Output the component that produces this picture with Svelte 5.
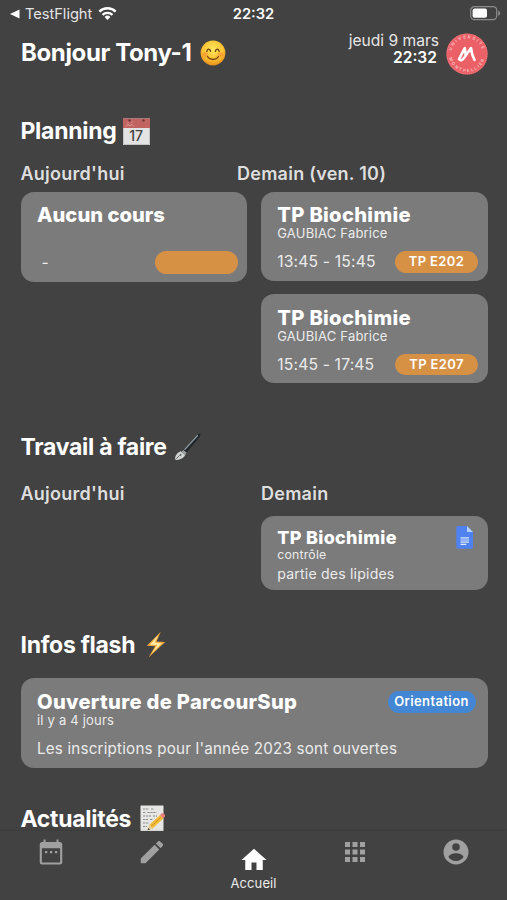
<script lang="ts">
  type Course = { title: string; teacher: string; hours: string; room: string };

  const time = '22:32';
  const date = 'jeudi 9 mars';

  const today: Course[] = [{ title: 'Aucun cours', teacher: '', hours: '\u00a0-', room: '' }];
  const tomorrow: Course[] = [
    { title: 'TP Biochimie', teacher: 'GAUBIAC Fabrice', hours: '13:45 - 15:45', room: 'TP E202' },
    { title: 'TP Biochimie', teacher: 'GAUBIAC Fabrice', hours: '15:45 - 17:45', room: 'TP E207' }
  ];

  // Tab bar icons, 24x24 viewBox
  const tabs = [
    { name: 'Planning', d: 'M19 4h-1V2h-1.600v2H7.600V2H6v2H5a2 2 0 0 0-2 2v14a2 2 0 0 0 2 2h14a2 2 0 0 0 2-2V6a2 2 0 0 0-2-2zm.3 16.300H4.700V9h14.600v11.300zM7.200 11.200h1.800v1.800H7.200zm4 0h1.800v1.800h-1.800zm4 0h1.800v1.800h-1.800z' },
    { name: 'Travail', d: 'M3 17.2V21h3.8L17.8 9.9l-3.7-3.7L3 17.2zM20.7 7a1 1 0 0 0 0-1.4l-2.3-2.3a1 1 0 0 0-1.4 0l-1.9 1.8 3.8 3.8L20.7 7z' },
    { name: 'Accueil', d: 'M10 20v-6h4v6h5v-8h3L12 3 2 12h3v8z', label: 'Accueil' },
    { name: 'Applications', d: 'M4 4h4v4H4zm6 0h4v4h-4zm6 0h4v4h-4zM4 10h4v4H4zm6 0h4v4h-4zm6 0h4v4h-4zM4 16h4v4H4zm6 0h4v4h-4zm6 0h4v4h-4z' },
    { name: 'Compte', d: 'M12 2a10 10 0 1 0 0 20 10 10 0 0 0 0-20zm0 3a3 3 0 1 1 0 6 3 3 0 0 1 0-6zm0 14.2a7.2 7.2 0 0 1-6-3.2c0-2 4-3.1 6-3.1s6 1.1 6 3.1a7.2 7.2 0 0 1-6 3.2z' }
  ];
</script>

{#snippet courseCard(course: Course)}
  <article class="card course">
    <h4 class="card-title">{course.title}</h4>
    <p class="card-sub">{course.teacher}</p>
    <div class="course-foot">
      <span class="hours">{course.hours}</span>
      <span class="room">{course.room}</span>
    </div>
  </article>
{/snippet}

<div class="screen">
  <div class="status">
    <div class="status-left">
      <svg class="back" width="10" height="10" viewBox="0 0 10 10"><path d="M0 5 9.5 .6v8.8z" fill="#fff" /></svg>
      <span>TestFlight</span>
      <svg class="wifi" width="19" height="14" viewBox="0 0 19 14" fill="#fff">
        <path d="M9.5 14 6.6 11a4.1 4.1 0 0 1 5.8 0z" />
        <path d="M3.7 8.1a8.2 8.2 0 0 1 11.6 0l-1.6 1.7a6 6 0 0 0-8.4 0z" />
        <path d="M.5 4.8a12.8 12.8 0 0 1 18 0l-1.7 1.7a10.4 10.4 0 0 0-14.6 0z" />
      </svg>
    </div>
    <span class="status-time">{time}</span>
    <svg class="battery" width="31" height="15" viewBox="0 0 31 15">
      <rect x=".7" y=".7" width="26" height="13" rx="3.6" fill="none" stroke="#8b8b8b" stroke-width="1.2" />
      <rect x="2.6" y="2.6" width="14.4" height="9.2" rx="1.8" fill="#fff" />
      <path d="M28.2 4.6c1.300.6 2 1.600 2 2.600s-.7 2-2 2.600z" fill="#8b8b8b" />
    </svg>
  </div>

  <header>
    <h1>
      Bonjour Tony-1
      <svg class="emoji" width="26" height="26" viewBox="0 0 26 26">
        <defs>
          <radialGradient id="face" cx=".5" cy=".35" r=".65">
            <stop offset="0" stop-color="#ffe65c" />
            <stop offset=".6" stop-color="#fbc534" />
            <stop offset="1" stop-color="#e88f1c" />
          </radialGradient>
        </defs>
        <circle cx="13" cy="13" r="12.400" fill="url(#face)" />
        <ellipse cx="5.500" cy="14.500" rx="3" ry="2.300" fill="#f58a35" opacity=".55" />
        <ellipse cx="20.500" cy="14.500" rx="3" ry="2.300" fill="#f58a35" opacity=".55" />
        <path d="M6.800 11.300c.5-3 3.300-3 3.800 0M15.400 11.300c.5-3 3.300-3 3.800 0" fill="none" stroke="#633b12" stroke-width="1.300" stroke-linecap="round" />
        <path d="M7.500 16.500c2.500 4 8.500 4 11 0" fill="none" stroke="#7a4512" stroke-width="1.300" stroke-linecap="round" />
      </svg>
    </h1>
    <div class="clock">
      <div class="date">{date}</div>
      <div class="time">{time}</div>
    </div>
    <svg class="logo" width="42" height="42" viewBox="0 0 42 42">
      <defs>
        <path id="arc-top" d="M5.800 24a15.500 15.500 0 1 1 30.400 0" />
        <path id="arc-bottom" d="M3.200 17a18.200 18.200 0 1 0 35.600 0" />
      </defs>
      <circle cx="21" cy="21" r="20.600" fill="#ea6066" />
      <circle cx="21" cy="21" r="20" fill="none" stroke="#f58a8e" stroke-width=".8" stroke-dasharray="1 1" />
      <text class="logo-text"><textPath href="#arc-top" startOffset="50%" text-anchor="middle">UNIVERSITÉ</textPath></text>
      <text class="logo-text"><textPath href="#arc-bottom" startOffset="50%" text-anchor="middle">MONTPELLIER</textPath></text>
      <path d="M18.800 15.200 13 26.200c1.800 1.800 4 .6 5.200-1.500l6.800-9.700c.4 4 1.500 8.300 3.500 11.900M18.800 15.200l.9 6.500" fill="none" stroke="#fff" stroke-width="2.600" stroke-linecap="round" stroke-linejoin="round" />
    </svg>
  </header>

  <main>
    <h2 class="planning">
      <span>Planning</span>
      <svg class="emoji" width="27" height="27" viewBox="0 0 27 27">
        <path d="M0 .5h27V27H0z" fill="#e3e3e3" />
        <path d="M0 .5h27V10H0z" fill="#c06361" />
        <path d="M3 8.500 5 6l1.500 2L9 6.500l2 2M4.500 5.200l1-1.500M8.500 5l1.200-1.500" stroke="#dfa09b" stroke-width=".9" fill="none" />
        <circle cx="6.500" cy="2.400" r="1.200" fill="#703432" />
        <circle cx="20.500" cy="2.400" r="1.200" fill="#703432" />
        <path d="M.5 10v16.500h26V10" fill="none" stroke="#c4c4c4" />
        <text x="13.200" y="23" text-anchor="middle" class="cal-day">17</text>
      </svg>
    </h2>
    <div class="days planning-days">
      <h3>Aujourd'hui</h3>
      <h3>Demain (ven. 10)</h3>
    </div>
    <div class="columns">
      <div class="column">
        {#each today as course}{@render courseCard(course)}{/each}
      </div>
      <div class="column">
        {#each tomorrow as course}{@render courseCard(course)}{/each}
      </div>
    </div>

    <h2 class="homework">
      <span>Travail à faire</span>
      <svg class="emoji" width="27" height="28" viewBox="0 0 27 28">
        <path d="M9 17.500 21.500 3.500C23.500 1.300 25.500.3 26.300.6c.5.800-.1 2.800-1.700 4.900L12.300 19.800z" fill="#20262a" />
        <path d="M10.500 16.800 23.800 2.300" stroke="#8d979c" stroke-width="1.300" />
        <path d="m7.500 18.700 2-1.700 3.200 2.700-1.500 2.200z" fill="#9aa0a2" />
        <path d="M.8 27c.3-4 1.900-7.200 5.900-8.700l4.500 3.600c-1.600 3.200-5.300 5-10.400 5.100z" fill="#d0d3d2" />
        <path d="m1 26.800 5-4.600" stroke="#55595b" stroke-width=".8" />
        <circle cx="6.600" cy="21.800" r=".9" fill="#55595b" />
      </svg>
    </h2>
    <div class="days homework-days">
      <h3>Aujourd'hui</h3>
      <h3>Demain</h3>
    </div>
    <div class="columns">
      <div class="column"></div>
      <div class="column">
        <article class="card task">
          <div>
            <h4 class="card-title">TP Biochimie</h4>
            <p class="card-sub">contrôle</p>
            <p class="card-text">partie des lipides</p>
          </div>
          <svg width="17" height="23" viewBox="0 0 17 23">
            <path d="M2 0h9l6 6v15a1.700 1.700 0 0 1-1.700 1.700H2A1.700 1.700 0 0 1 .3 21V1.700A1.700 1.700 0 0 1 2 0z" fill="#4f82ee" />
            <path d="M11 0l6 6h-6z" fill="#b5d0fa" />
            <path d="M4.500 11.800H13M4.500 14H13M4.500 16.200H13M4.500 18.400h5.800" stroke="#dce8fe" stroke-width="1.200" />
          </svg>
        </article>
      </div>
    </div>

    <h2 class="flash">
      <span>Infos flash</span>
      <svg class="emoji" width="20" height="27" viewBox="0 0 20 27">
        <path d="M14.800.8.800 14.700l8.300.5L2.500 26.500 19.200 11l-8.700-.6z" fill="#f2a83a" />
        <path d="M12.500 4 3.800 13.700l7.400.4-5.500 8.300L16 12.200l-7.300-.8z" fill="#ffe9a0" />
      </svg>
    </h2>
    <article class="card info">
      <div class="info-head">
        <h4 class="card-title">Ouverture de ParcourSup</h4>
        <span class="tag">Orientation</span>
      </div>
      <p class="card-sub">il y a 4 jours</p>
      <p class="card-text">Les inscriptions pour l'année 2023 sont ouvertes</p>
    </article>

    <h2 class="news">
      <span>Actualités</span>
      <svg class="emoji" width="25" height="27" viewBox="0 0 25 27">
        <path d="M.5.500h23V27H.5z" fill="#e6e6e4" />
        <path d="M3 4h6M11 4h3M3 7.500h3M7.500 7.500h9M3 11h8M13 11h4M3 14.500h5M10 14.500h3M3 18h6M3 21.500h4" stroke="#8d8d8d" stroke-width="1.100" stroke-dasharray="2.200 .7" />
        <path d="m7.600 25.300 1.800-5.500L20 10l3.300 3.400-10.400 9.800z" fill="#f2bd3a" />
        <path d="m11 21.500 10.600-9.800" stroke="#d68f22" stroke-width="1" />
        <path d="m7.600 25.300 1.800-5.500 3.500 3.400z" fill="#e9cfa0" />
        <path d="m7.600 25.300.8-2.300 1.500 1.400z" fill="#333" />
        <path d="m20 10 1.500-1.400c1.700-1.200 4.500 1.300 3.300 3.200l-1.500 1.600z" fill="#e77c78" />
      </svg>
    </h2>
  </main>

  <nav>
    {#each tabs as tab}
      <div class="tab" class:active={tab.label} aria-label={tab.name}>
        <svg width="30" height="30" viewBox="0 0 24 24" fill="currentColor"><path d={tab.d} /></svg>
        {#if tab.label}<span>{tab.label}</span>{/if}
      </div>
    {/each}
  </nav>
</div>

<style>
  :global(body) {
    margin: 0;
    background: #424242;
  }

  .screen {
    display: flex;
    flex-direction: column;
    width: 507px;
    height: 900px;
    overflow: hidden;
    background: #424242;
    color: #fff;
    font-family: Inter, 'Liberation Sans', sans-serif;
  }

  h1, h2, h3, h4, p {
    margin: 0;
  }

  svg {
    display: block;
    flex: none;
  }

  .status {
    display: grid;
    grid-template-columns: 1fr auto 1fr;
    align-items: center;
    height: 28px;
    flex: none;
    padding: 0 6px;
    font-size: 14.7px;
  }

  .status-left {
    display: flex;
    align-items: center;
    padding-left: 4px;
    color: #e4e4e4;
    letter-spacing: -0.05px;
  }

  .back {
    margin-right: 5px;
  }

  .wifi {
    margin-left: 6px;
    margin-bottom: 2px;
  }

  .status-time {
    font-weight: 600;
  }

  .battery {
    justify-self: end;
    margin-bottom: 1px;
  }

  header {
    display: flex;
    height: 88px;
    flex: none;
    padding: 0 19px 0 21px;
  }

  h1, h2 {
    display: flex;
    align-items: center;
    font-size: 23px;
    line-height: 30px;
    font-weight: 700;
    white-space: nowrap;
  }

  h1 {
    gap: 9px;
    height: 50px;
    margin-right: auto;
    font-size: 24px;
    letter-spacing: -0.37px;
  }

  h2 {
    gap: 7px;
    height: 30px;
    flex: none;
    letter-spacing: -0.28px;
  }

  .clock {
    padding-top: 4px;
    margin-right: 7px;
    text-align: right;
    font-size: 15.6px;
    line-height: 17px;
  }

  .date {
    color: #e6e6e6;
  }

  .time {
    padding-right: 2px;
    font-weight: 600;
  }

  .logo {
    margin-top: 5px;
  }

  .logo-text {
    font-size: 4.2px;
    font-weight: 700;
    letter-spacing: 1.7px;
    fill: #f9bcbd;
  }

  .cal-day {
    font-size: 14px;
    font-weight: 500;
    letter-spacing: 0;
    fill: #444;
  }

  main {
    display: flex;
    flex-direction: column;
    flex: 1;
    min-height: 0;
    overflow: hidden;
    padding: 0 19.5px 0 20.5px;
  }

  .days {
    display: flex;
    flex: none;
  }

  h3 {
    width: 240.5px;
    flex: none;
    font-size: 18px;
    line-height: 24px;
    font-weight: 600;
    letter-spacing: 0.25px;
    color: #dedede;
    white-space: nowrap;
  }

  .planning-days {
    margin: 16px 0 5.5px;
  }

  .planning-days h3 {
    width: 216.5px;
  }

  .homework-days {
    margin: 20px 0 10px;
  }

  .columns {
    display: flex;
    align-items: flex-start;
    gap: 13.5px;
  }

  .column {
    display: flex;
    flex: 1;
    min-width: 0;
    flex-direction: column;
    gap: 13.5px;
  }

  .card {
    box-sizing: border-box;
    padding: 11.5px 9.5px 0 16.5px;
    border-radius: 13px;
    background: #7b7b7b;
    white-space: nowrap;
  }

  .card-title {
    font-size: 20.2px;
    line-height: 24px;
    font-weight: 800;
    letter-spacing: 0.3px;
  }

  .card-sub {
    height: 14px;
    margin-top: -1px;
    font-size: 13px;
    line-height: 14px;
    letter-spacing: 0.2px;
    color: #ebebeb;
  }

  .card-text {
    font-size: 15.2px;
    line-height: 20px;
    letter-spacing: 0.19px;
    color: #ebebeb;
  }

  .course {
    height: 89px;
  }

  .column:first-child .course {
    height: 90.5px;
  }

  .column:first-child .card-title {
    letter-spacing: 0;
  }

  .column:first-child .room {
    height: 22.5px;
  }

  .course-foot {
    display: flex;
    align-items: center;
    justify-content: space-between;
    margin-top: 11px;
  }

  .hours {
    font-size: 15.7px;
    line-height: 21px;
    letter-spacing: 0.15px;
    color: #ebebeb;
  }

  .room {
    width: 83px;
    height: 21.5px;
    border-radius: 12px;
    background: #d69145;
    text-align: center;
    font-size: 13px;
    line-height: 21.5px;
    font-weight: 600;
    letter-spacing: 0.35px;
  }

  .homework {
    margin-top: 48.5px;
  }

  .task {
    display: flex;
    justify-content: space-between;
    height: 74.5px;
    padding: 10px 14.5px 0 16.5px;
  }

  .task .card-title {
    font-size: 18px;
  }

  .task .card-sub {
    margin-top: -1.5px;
    font-size: 12.3px;
  }

  .task .card-text {
    margin-top: 1.5px;
    font-size: 14.1px;
  }

  .flash {
    gap: 11px;
    margin-top: 39.5px;
    margin-bottom: 18.8px;
  }

  .info {
    height: 89.7px;
    flex: none;
    padding-right: 12px;
  }

  .info-head {
    display: flex;
    justify-content: space-between;
    align-items: center;
  }

  .info .card-text {
    margin-top: 12px;
  }

  .tag {
    width: 88px;
    height: 21.5px;
    border-radius: 11px;
    background: #4386d3;
    text-align: center;
    font-size: 13px;
    line-height: 21.5px;
    font-weight: 600;
    letter-spacing: 0.4px;
  }

  .news {
    gap: 9px;
    margin-top: 35.7px;
  }

  nav {
    display: flex;
    height: 69px;
    flex: none;
    box-shadow: 0 0 3px rgba(0, 0, 0, 0.18);
    background: #424242;
    position: relative;
  }

  .tab {
    display: flex;
    flex: 1;
    flex-direction: column;
    align-items: center;
    padding-top: 6px;
    color: #a0a0a0;
  }

  .tab.active {
    padding-top: 14px;
    color: #fff;
  }

  .tab span {
    font-size: 13px;
    line-height: 16px;
    letter-spacing: 0.1px;
    color: #ededed;
  }
</style>
